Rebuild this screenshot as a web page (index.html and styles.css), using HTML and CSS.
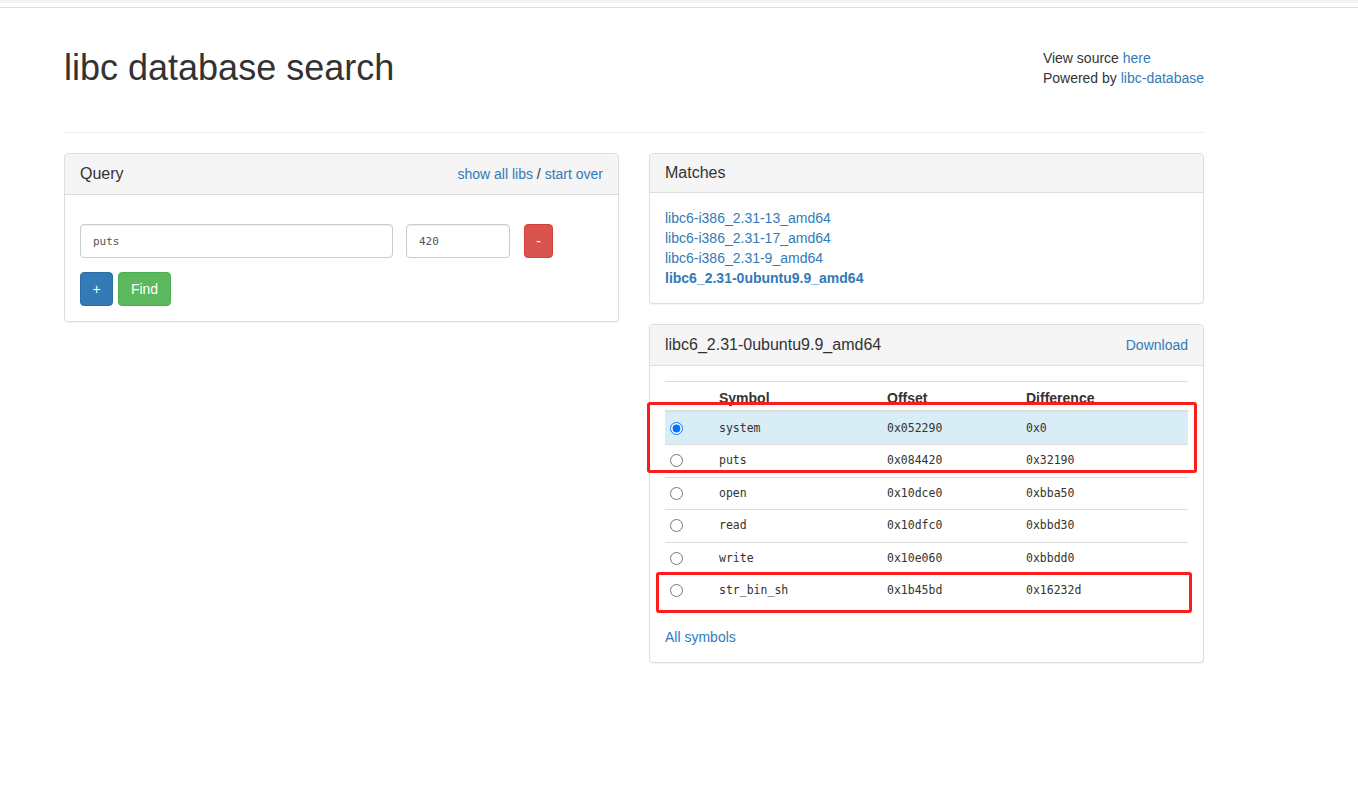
FILE: index.html
```html
<!DOCTYPE html>
<html>
<head>
<meta charset="utf-8">
<title>libc database search</title>
<link rel="stylesheet" href="styles.css">
</head>
<body>
<div class="chrome-bar"></div>
<div class="chrome-line"></div>
<div class="container">
  <div class="page-header">
    <h1 class="title">libc database search</h1>
    <div class="about">
      <div>View source <a href="#">here</a></div>
      <div>Powered by <a href="#">libc-database</a></div>
    </div>
  </div>
  <div class="row">
    <div class="col">
      <div class="panel">
        <div class="panel-heading heading-links">
          <span class="panel-title">Query</span>
          <span><a href="#">show all libs</a> / <a href="#">start over</a></span>
        </div>
        <div class="panel-body">
          <div class="form-row">
            <input class="form-control input-symbol" type="text" value="puts">
            <input class="form-control input-addr" type="text" value="420">
            <button class="btn btn-danger btn-remove">-</button>
          </div>
          <div class="form-row form-actions">
            <button class="btn btn-primary">+</button>
            <button class="btn btn-success">Find</button>
          </div>
        </div>
      </div>
    </div>
    <div class="col">
      <div class="panel">
        <div class="panel-heading">
          <span class="panel-title">Matches</span>
        </div>
        <div class="panel-body matches">
          <a href="#">libc6-i386_2.31-13_amd64</a>
          <a href="#">libc6-i386_2.31-17_amd64</a>
          <a href="#">libc6-i386_2.31-9_amd64</a>
          <a href="#" class="active">libc6_2.31-0ubuntu9.9_amd64</a>
        </div>
      </div>
      <div class="panel">
        <div class="panel-heading heading-links">
          <span class="panel-title">libc6_2.31-0ubuntu9.9_amd64</span>
          <a href="#">Download</a>
        </div>
        <div class="panel-body">
          <table class="table">
            <colgroup>
              <col class="c-radio"><col class="c-sym"><col class="c-off"><col class="c-diff">
            </colgroup>
            <thead>
              <tr><th></th><th>Symbol</th><th>Offset</th><th>Difference</th></tr>
            </thead>
            <tbody>
              <tr class="info"><td><input type="radio" name="base" checked></td><td>system</td><td>0x052290</td><td>0x0</td></tr>
              <tr><td><input type="radio" name="base"></td><td>puts</td><td>0x084420</td><td>0x32190</td></tr>
              <tr><td><input type="radio" name="base"></td><td>open</td><td>0x10dce0</td><td>0xbba50</td></tr>
              <tr><td><input type="radio" name="base"></td><td>read</td><td>0x10dfc0</td><td>0xbbd30</td></tr>
              <tr><td><input type="radio" name="base"></td><td>write</td><td>0x10e060</td><td>0xbbdd0</td></tr>
              <tr><td><input type="radio" name="base"></td><td>str_bin_sh</td><td>0x1b45bd</td><td>0x16232d</td></tr>
            </tbody>
          </table>
          <a href="#">All symbols</a>
        </div>
      </div>
    </div>
  </div>
</div>
<div class="mark mark-1"></div>
<div class="mark mark-2"></div>
</body>
</html>
```

FILE: styles.css
```css
* { box-sizing: border-box; }
html, body { margin: 0; padding: 0; background: #fff; }
body {
  font-family: "Liberation Sans", Arial, sans-serif;
  font-size: 14px;
  line-height: 20px;
  color: #333;
  position: relative;
  min-height: 793px;
}
a { color: #337ab7; text-decoration: none; }

.chrome-bar { height: 3px; background: #f1f3f4; }
.chrome-line { height: 1px; margin-top: 4px; background: #dedede; }

.container { width: 1140px; margin-left: 64px; }

.page-header {
  display: flex;
  justify-content: space-between;
  align-items: flex-start;
  padding-top: 40px;
  padding-bottom: 44px;
  border-bottom: 1px solid #eee;
}
.title {
  margin: 0;
  font-size: 36px;
  font-weight: 500;
  line-height: 39.6px;
  color: #333;
}
.about { white-space: nowrap; }

.row { display: flex; gap: 30px; margin-top: 20px; }
.col { width: 555px; }

.panel {
  border: 1px solid #ddd;
  border-radius: 4px;
  background: #fff;
  box-shadow: 0 1px 1px rgba(0,0,0,.05);
  margin-bottom: 20px;
}
.panel-heading {
  background: #f5f5f5;
  border-bottom: 1px solid #ddd;
  border-radius: 3px 3px 0 0;
  padding: 10px 15px;
  display: flex;
  justify-content: space-between;
  align-items: center;
}
.panel-title { font-size: 16px; line-height: 17.6px; color: #333; }
.heading-links { line-height: 20px; }
.panel-body { padding: 15px; }

.form-row { display: flex; align-items: center; margin-top: 14px; }
.form-actions { gap: 5px; }
.form-control {
  height: 34px;
  padding: 6px 12px;
  border: 1px solid #ccc;
  border-radius: 4px;
  box-shadow: inset 0 1px 1px rgba(0,0,0,.075);
  font-family: "DejaVu Sans Mono", "Liberation Mono", monospace;
  font-size: 11px;
  color: #555;
  background: #fff;
}
.input-symbol { width: 313px; }
.input-addr { width: 104px; margin-left: 13px; }
.btn {
  height: 34px;
  padding: 6px 12px;
  border: 1px solid transparent;
  border-radius: 4px;
  font-family: "Liberation Sans", Arial, sans-serif;
  font-size: 14px;
  line-height: 20px;
  color: #fff;
}
.btn-remove { margin-left: 14px; width: 29px; padding: 6px 0; }
.btn-danger { background: #d9534f; border-color: #d43f3a; }
.btn-primary { background: #337ab7; border-color: #2e6da4; width: 33px; padding: 6px 0; }
.btn-success { background: #5cb85c; border-color: #4cae4c; width: 53px; padding: 6px 0; }

.matches a { display: block; }
.matches a.active { font-weight: bold; }

.table {
  width: 523px;
  table-layout: fixed;
  border-collapse: collapse;
  margin-bottom: 20px;
}
.c-radio { width: 46px; }
.c-sym { width: 168px; }
.c-off { width: 139px; }
.c-diff { width: 170px; }
.table th {
  text-align: left;
  font-weight: bold;
  padding: 6px 8px 2px;
  line-height: 20px;
  border-top: 1px solid #ddd;
  border-bottom: 2px solid #ddd;
}
.table td {
  padding: 6px 8px;
  line-height: 19.5px;
  border-top: 1px solid #ddd;
  font-family: "DejaVu Sans Mono", "Liberation Mono", monospace;
  font-size: 11.5px;
  color: #333;
  vertical-align: middle;
}
.table tbody tr:first-child td { border-top: 0; padding-top: 7px; }
.table td:first-child { padding-left: 5px; padding-right: 0; }
.table tr.info td { background: #d9edf7; }
.table input[type=radio] {
  margin: 0;
  width: 13px;
  height: 13px;
  display: block;
}

.mark {
  position: absolute;
  border: 3px solid #fe1b1b;
  border-radius: 3px;
  pointer-events: none;
}
.mark-1 { left: 647px; top: 402px; width: 550px; height: 71px; }
.mark-2 { left: 656px; top: 572px; width: 536px; height: 41px; }
```
